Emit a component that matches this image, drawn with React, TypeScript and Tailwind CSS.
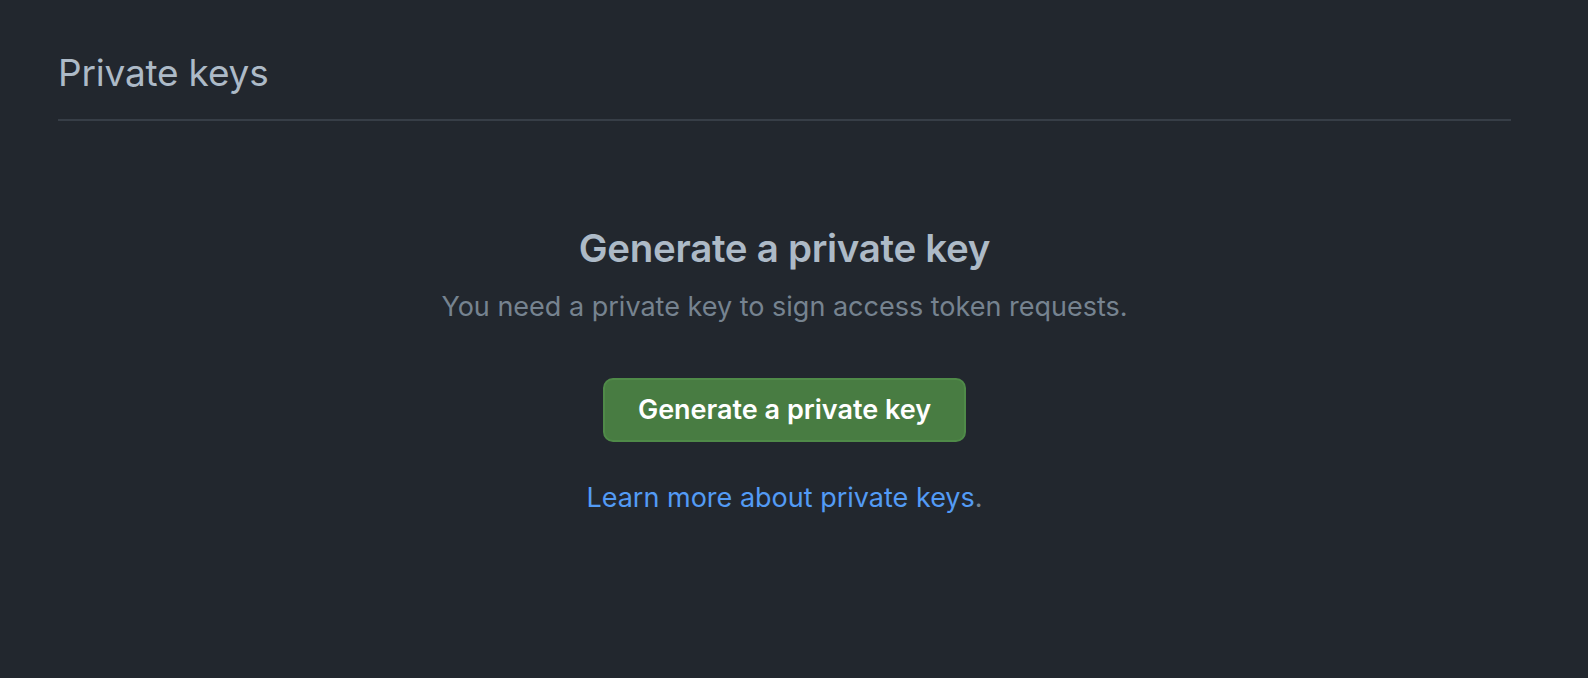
export default function App() {
  return (
    <div
      className="min-h-[678px] w-full bg-[#22272e] text-[#adbac7]"
      style={{ fontFamily: "Inter, 'Noto Sans', sans-serif" }}
    >
      <div className="ml-[58px] w-[1453px] pt-[49px]">
        <div className="border-b-2 border-[#373e47] pb-[22px]">
          <h2 className="text-[37px] font-normal leading-[48px] tracking-[-0.2px] text-[#adbac7]">Private keys</h2>
        </div>

        <div className="flex flex-col items-center pt-[100px]">
          <h3 className="text-[38.5px] font-semibold leading-[54px] tracking-[-0.3px] text-[#adbac7]">
            Generate a private key
          </h3>
          <p className="mt-[12px] text-[27px] leading-[40px] text-[#768390]">
            You need a private key to sign access token requests.
          </p>
          <button
            type="button"
            className="mt-[51px] flex h-[64px] w-[363px] items-center justify-center rounded-[10px] border-2 border-[#4f8a48] bg-[#487c42] text-[27px] font-semibold text-white"
          >
            Generate a private key
          </button>
          <p className="mt-[36px] text-[27px] leading-[40px] text-[#768390]">
            <a className="text-[#539bf5]">Learn more about private keys</a>.
          </p>
        </div>
      </div>
    </div>
  );
}
